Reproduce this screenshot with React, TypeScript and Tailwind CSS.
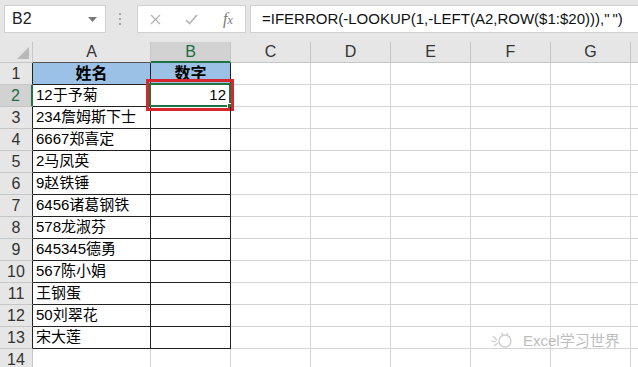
import React from 'react';

const FONT = '"Liberation Sans", "Noto Sans CJK SC", sans-serif';

const names = [
  '12于予菊',
  '234詹姆斯下士',
  '6667郑喜定',
  '2马凤英',
  '9赵铁锤',
  '6456诸葛钢铁',
  '578龙淑芬',
  '645345德勇',
  '567陈小娟',
  '王钢蛋',
  '50刘翠花',
  '宋大莲',
];

const cols = ['C', 'D', 'E', 'F', 'G'];

const FormulaBar = () => (
  <div className="h-[42px] bg-[#e6e6e6] relative">
    {/* name box */}
    <div className="absolute left-[4px] top-[5px] w-[102px] h-[28px] bg-white border border-[#d0d0d0] flex items-center px-[7px] text-[16px] text-[#222]">
      <span>B2</span>
      <svg className="ml-auto mr-[1px]" width="9" height="5" viewBox="0 0 9 5">
        <path d="M0 0 L9 0 L4.5 5 Z" fill="#7a7a7a" />
      </svg>
    </div>
    {/* dots */}
    <div className="absolute left-[119px] top-[13px] flex flex-col gap-[3px]">
      <div className="w-[2px] h-[2px] bg-[#a8a8a8]" />
      <div className="w-[2px] h-[2px] bg-[#a8a8a8]" />
      <div className="w-[2px] h-[2px] bg-[#a8a8a8]" />
    </div>
    {/* fx box */}
    <div className="absolute left-[137px] top-[5px] w-[109px] h-[28px] bg-white border border-[#d0d0d0] flex items-center">
      <svg className="ml-[12px]" width="11" height="11" viewBox="0 0 11 11">
        <path d="M1 1 L10 10 M10 1 L1 10" stroke="#b4b4b4" strokeWidth="1.3" fill="none" />
      </svg>
      <svg className="ml-[24px]" width="13" height="11" viewBox="0 0 13 11">
        <path d="M1 6 L4.5 9.5 L12 1" stroke="#b4b4b4" strokeWidth="1.6" fill="none" />
      </svg>
      <span
        className="ml-[25px] text-[16px] italic text-[#7a7a7a]"
        style={{ fontFamily: '"Liberation Serif", serif' }}
      >
        f<span className="text-[12px]">x</span>
      </span>
    </div>
    {/* formula input */}
    <div className="absolute left-[250px] top-[5px] right-0 h-[28px] bg-white border-y border-l border-[#d0d0d0] flex items-center pl-[11px] text-[15px] text-[#111] whitespace-nowrap">
      =IFERROR(-LOOKUP(1,-LEFT(A2,ROW($1:$20))),&quot;&thinsp;&quot;)
    </div>
  </div>
);

const HeaderRow = () => (
  <div className="flex h-[21px] bg-[#e6e6e6] text-[16px] text-[#333]">
    <div className="w-[33px] shrink-0 border-r border-b border-[#c6c6c6] relative">
      <svg className="absolute right-[3px] bottom-[3px]" width="12" height="12" viewBox="0 0 12 12">
        <path d="M12 0 L12 12 L0 12 Z" fill="#b9b9b9" />
      </svg>
    </div>
    <div className="w-[118px] shrink-0 border-r border-b border-r-[#c6c6c6] border-b-[#555] flex items-center justify-center">A</div>
    <div className="w-[80px] shrink-0 border-r border-r-[#c6c6c6] border-b-2 border-b-[#217346] bg-[#d2d2d2] text-[#1e6b41] flex items-center justify-center">B</div>
    {cols.map((c) => (
      <div key={c} className="w-[80px] shrink-0 border-r border-b border-[#c6c6c6] flex items-center justify-center">
        {c}
      </div>
    ))}
    <div className="flex-1 border-b border-[#c6c6c6]" />
  </div>
);

const Row = ({ n }: { n: number }) => {
  const inTable = n <= 13;
  const selected = n === 2;
  const a = n === 1 ? '姓名' : names[n - 2] ?? '';
  return (
    <div className="flex h-[22px] text-[15px]">
      <div
        className={`w-[33px] shrink-0 border-b border-b-[#c6c6c6] flex items-center justify-center text-[16px] ${
          selected
            ? 'bg-[#d2d2d2] text-[#1e6b41] border-r-2 border-r-[#217346]'
            : inTable
            ? 'bg-[#e6e6e6] text-[#333] border-r border-r-[#222]'
            : 'bg-[#e6e6e6] text-[#333] border-r border-r-[#c6c6c6]'
        }`}
      >
        {n}
      </div>
      <div
        className={`w-[118px] shrink-0 border-r border-b flex items-center ${
          inTable ? 'border-[#222]' : 'border-[#d4d4d4]'
        } ${n === 1 ? 'bg-[#9bc2e6] font-bold justify-center text-[16px]' : 'pl-[3px]'}`}
      >
        {a}
      </div>
      <div
        className={`w-[80px] shrink-0 border-r border-b flex items-center relative ${
          inTable ? 'border-[#222]' : 'border-[#d4d4d4]'
        } ${n === 1 ? 'bg-[#9bc2e6] font-bold justify-center text-[16px]' : 'justify-end pr-[4px]'}`}
      >
        {n === 1 ? '数字' : selected ? '12' : ''}
        {selected && (
          <>
            <div className="absolute left-[-2px] top-[-2px] w-[82px] h-[24px] border-2 border-[#217346]" />
            <div className="absolute right-[-3px] bottom-[-3px] w-[6px] h-[6px] bg-[#217346] border border-white" />
            <div className="absolute left-[-5px] top-[-6px] w-[88px] h-[32px] border-[3px] border-[#d7262c]" />
          </>
        )}
      </div>
      {cols.map((c) => (
        <div key={c} className="w-[80px] shrink-0 border-r border-b border-[#d4d4d4]" />
      ))}
      <div className="flex-1 border-b border-[#d4d4d4]" />
    </div>
  );
};

export default function App() {
  return (
    <div className="w-[638px] h-[367px] overflow-hidden bg-white relative" style={{ fontFamily: FONT }}>
      <FormulaBar />
      <HeaderRow />
      {Array.from({ length: 14 }, (_, i) => (
        <Row key={i} n={i + 1} />
      ))}
      {/* watermark */}
      <div className="absolute left-[490px] top-[331px] flex items-center gap-[9px] text-[#bdbdbd]">
        <svg width="24" height="18" viewBox="0 0 24 18">
          <circle cx="15" cy="10" r="6" fill="none" stroke="#cdcdcd" strokeWidth="1.3" />
          <path d="M3 5 L7 9 M1 10 L6 11 M4 15 L8 12" stroke="#cdcdcd" strokeWidth="1.2" />
          <path d="M11 4 L13 2 M17 2 L18 4" stroke="#cdcdcd" strokeWidth="1.2" />
        </svg>
        <span className="text-[15px] leading-none">Excel学习世界</span>
      </div>
    </div>
  );
}
